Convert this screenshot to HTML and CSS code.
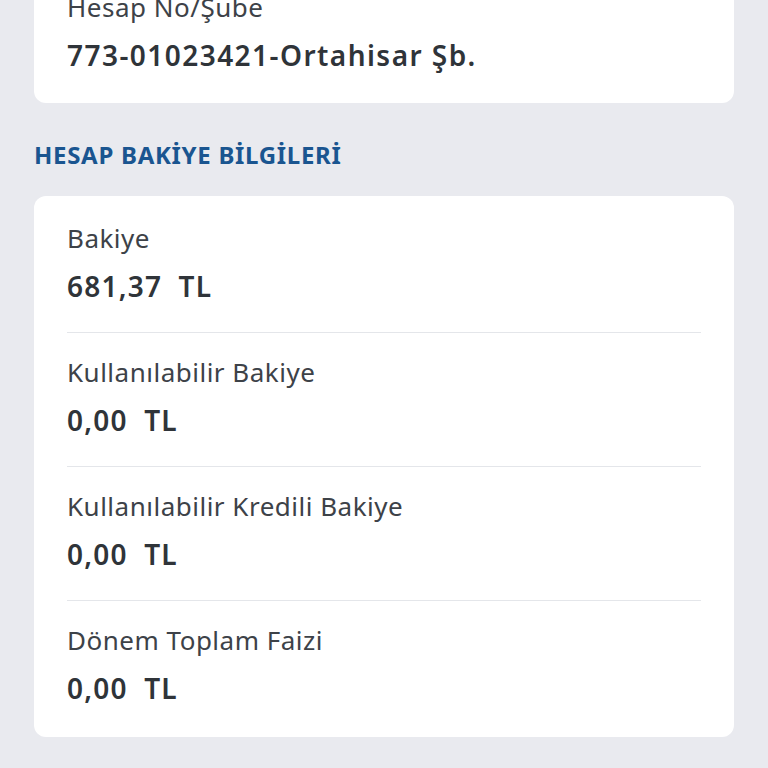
FILE: index.html
```html
<!DOCTYPE html>
<html lang="tr">
<head>
<meta charset="utf-8">
<link rel="stylesheet" href="styles.css">
</head>
<body>
<main class="page">
  <section class="card card-top">
    <div class="row row-plain">
      <div class="label">Hesap No/Şube</div>
      <div class="value value-acct">773-01023421-Ortahisar Şb.</div>
    </div>
  </section>
  <h2 class="section-title">HESAP BAKİYE BİLGİLERİ</h2>
  <section class="card card-list">
    <div class="row">
      <div class="label">Bakiye</div>
      <div class="value amount">681,37 TL</div>
    </div>
    <div class="row">
      <div class="label">Kullanılabilir Bakiye</div>
      <div class="value amount">0,00 TL</div>
    </div>
    <div class="row">
      <div class="label">Kullanılabilir Kredili Bakiye</div>
      <div class="value amount">0,00 TL</div>
    </div>
    <div class="row row-last">
      <div class="label">Dönem Toplam Faizi</div>
      <div class="value amount">0,00 TL</div>
    </div>
  </section>
</main>
</body>
</html>
```

FILE: styles.css
```css
html, body {
  margin: 0;
  padding: 0;
  background: #e9eaef;
  font-family: "Noto Sans", "Open Sans", sans-serif;
}
.page {
  display: flex;
  flex-direction: column;
  padding: 0 34px;
  overflow: hidden;
  height: 768px;
  box-sizing: border-box;
}
.card {
  background: #ffffff;
  border-radius: 12px;
  padding: 0 33px;
  display: flex;
  flex-direction: column;
}
.card-top {
  margin-top: -40px;
  padding-top: 30px;
  padding-bottom: 30px;
}
.card-list {
  padding-top: 3px;
  padding-bottom: 3px;
}
.row {
  display: flex;
  flex-direction: column;
  gap: 13px;
  padding: 22px 0 28px;
  border-bottom: 1px solid #e4e6ea;
}
.row-plain {
  padding: 0;
  border-bottom: none;
}
.row-last {
  border-bottom: none;
}
.label {
  font-size: 26px;
  line-height: 34px;
  letter-spacing: 0.5px;
  color: #3d4248;
}
.value {
  font-size: 28px;
  line-height: 36px;
  font-weight: 600;
  letter-spacing: 1.2px;
  color: #2f3439;
}
.value-acct {
  letter-spacing: 1.45px;
}
.amount {
  word-spacing: 8px;
}
.section-title {
  margin: 36px 0 25px;
  font-size: 24px;
  line-height: 32px;
  font-weight: 700;
  letter-spacing: 0.7px;
  color: #1a5590;
}
```
